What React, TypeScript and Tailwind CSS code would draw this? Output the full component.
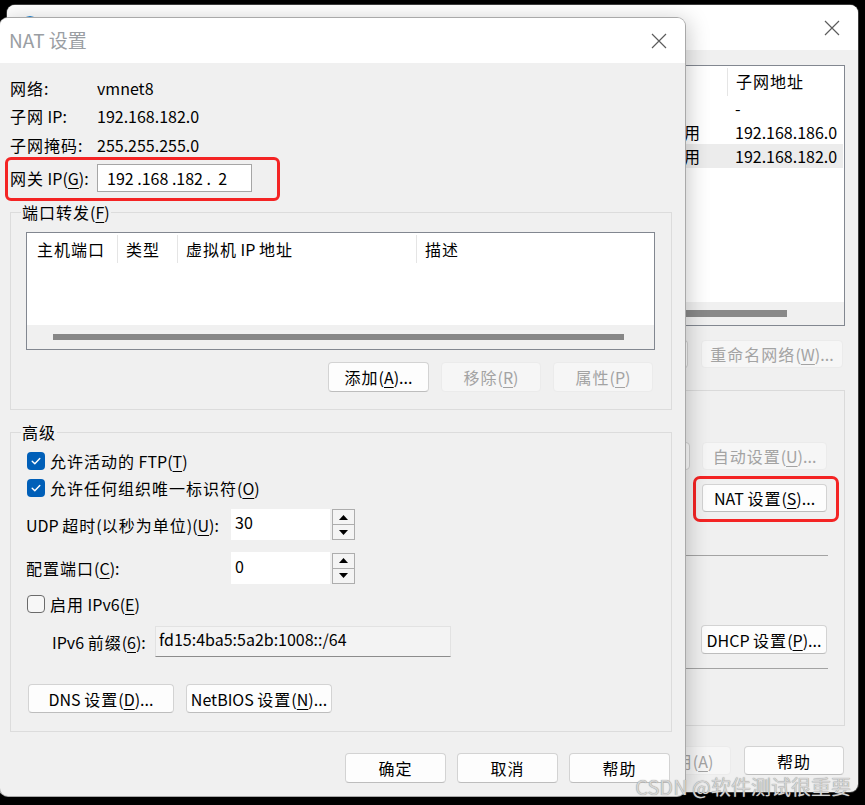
import React from "react";

// CJK runs in the reference sit on a ~17px pitch while Latin text is narrower;
// widen only the CJK runs with a little letter spacing.
function T({ s }: { s: string }) {
  const parts = s.split(/([\u3400-\u9fff]+)/);
  return (
    <span className="whitespace-pre">
      {parts.map((p, i) =>
        /[\u3400-\u9fff]/.test(p) ? (
          <span key={i} className="tracking-[1px]">
            {p}
          </span>
        ) : (
          <React.Fragment key={i}>{p}</React.Fragment>
        )
      )}
    </span>
  );
}

function Mn({ c }: { c: string }) {
  return <span className="underline decoration-1 underline-offset-[3px]">{c}</span>;
}

function CloseX() {
  return (
    <svg width="16" height="16" viewBox="0 0 16 16">
      <path d="M1 1 L15 15 M15 1 L1 15" stroke="#5c5c5c" strokeWidth="1.2" fill="none" />
    </svg>
  );
}

type BtnProps = { children?: React.ReactNode; className?: string; disabled?: boolean };
function Btn({ children, className = "", disabled = false }: BtnProps) {
  return (
    <div
      className={`flex shrink-0 items-center justify-center whitespace-nowrap rounded-[4px] border ${
        disabled
          ? "border-[#ebebeb] bg-[#f6f6f6] text-[#a3a3a3]"
          : "border-[#d3d3d3] border-b-[#bdbdbd] bg-[#fdfdfd] text-black"
      } ${className}`}
    >
      <span>{children}</span>
    </div>
  );
}

function Check({ checked }: { checked: boolean }) {
  return checked ? (
    <div className="flex h-[18px] w-[18px] shrink-0 items-center justify-center rounded-[4px] bg-[#005fb8]">
      <svg width="12" height="12" viewBox="0 0 12 12">
        <path d="M2.2 6.3 L4.8 8.8 L9.8 3.4" stroke="white" strokeWidth="1.4" fill="none" strokeLinecap="round" strokeLinejoin="round" />
      </svg>
    </div>
  ) : (
    <div className="h-[18px] w-[18px] shrink-0 rounded-[4px] border border-[#6b6b6b] bg-[#f7f7f7]" />
  );
}

function Spin() {
  return (
    <div className="ml-[2px] flex h-[31px] w-[23px] flex-col border border-[#adadad] bg-[#f4f4f4]">
      <div className="flex flex-1 items-center justify-center border-b border-[#adadad]">
        <svg width="9" height="5" viewBox="0 0 9 5">
          <path d="M0 5 L4.5 0 L9 5 Z" fill="#000" />
        </svg>
      </div>
      <div className="flex flex-1 items-center justify-center">
        <svg width="9" height="5" viewBox="0 0 9 5">
          <path d="M0 0 L4.5 5 L9 0 Z" fill="#000" />
        </svg>
      </div>
    </div>
  );
}

// Only the columns that show past the front dialog carry text (DHCP, 子网地址).
const netRows = [
  { dhcp: "", subnet: "-", selected: false },
  { dhcp: "已启用", subnet: "192.168.186.0", selected: false },
  { dhcp: "已启用", subnet: "192.168.182.0", selected: true },
];
const netCols = ["w-[89px]", "w-[110px]", "w-[220px]", "w-[205px]"];

function BackWindow() {
  return (
    <div className="absolute left-[7px] top-[5px] flex h-[787px] w-[851px] flex-col overflow-hidden rounded-[8px] bg-[#f0f0f0] ring-1 ring-[#3c3c3c]">
      <div className="flex h-[45px] shrink-0 items-center justify-between bg-white pl-[14px] pr-[18px]">
        <div className="mb-[6px] h-[18px] w-[18px] rounded-full bg-[#1f86d6]" />
        <CloseX />
      </div>
      <div className="flex flex-1 flex-col px-[13px]">
        {/* network list */}
        <div className="mt-[15px] flex h-[261px] flex-col border border-[#828790] bg-white">
          <div className="flex h-[30px] shrink-0">
            {netCols.map((w, i) => (
              <div key={i} className={`${w} mt-[2px] border-r border-[#e5e5e5]`} />
            ))}
            <div className="mt-[2px] w-[83px] border-r border-[#e5e5e5]" />
            <div className="flex flex-1 items-center pl-[8px]">
              <T s="子网地址" />
            </div>
          </div>
          <div className="flex flex-col px-[1px]">
            {netRows.map((r, ri) => (
              <div key={ri} className={`flex h-[24px] items-center ${r.selected ? "bg-[#ececec]" : ""}`}>
                <div className="w-[623px] shrink-0" />
                <div className="w-[83px] whitespace-nowrap pl-[5px]">
                  <T s={r.dhcp} />
                </div>
                <div className="flex-1 pl-[7px]">{r.subnet}</div>
              </div>
            ))}
          </div>
          <div className="flex-1" />
          <div className="flex h-[23px] shrink-0 items-center bg-[#f0f0f0] pl-[20px] pr-[57px]">
            <div className="h-[7px] flex-1 bg-[#898989]" />
          </div>
        </div>

        {/* network buttons */}
        <div className="mt-[14px] flex h-[28px] justify-end gap-[13px] pr-[2px]">
          <Btn className="w-[125px]" />
          <Btn className="w-[100px]" />
          <Btn disabled className="w-[142px]">
            <T s="重命名网络(" />
            <Mn c="W" />
            )...
          </Btn>
        </div>

        {/* VMnet info group */}
        <div className="mt-[22px] flex h-[336px] flex-col border border-[#dadada] pl-[20px] pr-[17px]">
          <div className="mt-[51px] flex h-[28px] justify-end gap-[12px]">
            <div className="w-[220px] rounded-[4px] border border-[#d3d3d3] bg-[#fdfdfd]" />
            <Btn disabled className="w-[125px]">
              <T s="自动设置(" />
              <Mn c="U" />
              )...
            </Btn>
          </div>
          <div className="mt-[14px] flex h-[28px] justify-end">
            <div className="relative">
              <Btn className="h-[28px] w-[125px]">
                <T s="NAT 设置(" />
                <Mn c="S" />
                )...
              </Btn>
              <div className="absolute left-[-9px] top-[-8px] h-[46px] w-[146px] rounded-[7px] border-[3px] border-[#f42424]" />
            </div>
          </div>
          <div className="mr-[-1px] mt-[43px] h-px bg-[#a3a3a3]" />
          <div className="mt-[69px] flex h-[29px] justify-end">
            <Btn className="w-[126px]">
              <T s="DHCP 设置(" />
              <Mn c="P" />
              )...
            </Btn>
          </div>
          <div className="mr-[-1px] mt-[14px] h-px bg-[#a3a3a3]" />
        </div>

        {/* bottom buttons */}
        <div className="mt-[20px] flex h-[29px] justify-end gap-[13px] pr-[1px]">
          <Btn className="w-[100px]" />
          <Btn className="w-[100px]" />
          <Btn disabled className="w-[90px]">
            <T s="应用(" />
            <Mn c="A" />)
          </Btn>
          <Btn className="w-[100px]">
            <T s="帮助" />
          </Btn>
        </div>
      </div>
    </div>
  );
}

function NatDialog() {
  return (
    <div className="absolute left-0 top-[18px] flex h-[778px] w-[685px] flex-col overflow-hidden rounded-[8px] bg-[#f0f0f0] shadow-[3px_2px_22px_rgba(0,0,0,0.22)] ring-1 ring-[#a9a9a9]">
      <div className="flex h-[45px] shrink-0 items-center justify-between bg-white pl-[9px] pr-[18px]">
        <span className="text-[19px] text-[#9a9ea3]">NAT 设置</span>
        <CloseX />
      </div>
      <div className="flex flex-col pl-[10px] pr-[13px] pt-[11px]">
        <div className="flex h-[28px] items-center">
          <span className="w-[87px]">
            <T s="网络:" />
          </span>
          <span>vmnet8</span>
        </div>
        <div className="flex h-[28px] items-center">
          <span className="w-[87px]">
            <T s="子网 IP:" />
          </span>
          <span>192.168.182.0</span>
        </div>
        <div className="flex h-[30px] items-center">
          <span className="w-[87px]">
            <T s="子网掩码:" />
          </span>
          <span>255.255.255.0</span>
        </div>
        <div className="relative mt-[4px] flex h-[28px] items-center">
          <span className="w-[87px] whitespace-nowrap">
            <T s="网关 IP(" />
            <Mn c="G" />
            ):
          </span>
          <div className="flex h-[28px] w-[155px] items-center whitespace-pre border border-[#a6a6a6] bg-white pl-[9px]">
            192 .168 .182 .  2
          </div>
          <div className="absolute left-[-5px] top-[-7px] h-[44px] w-[275px] rounded-[6px] border-[3px] border-[#f42424]" />
        </div>

        {/* port forwarding */}
        <fieldset className="mt-[8px] border border-[#dcdcdc]">
          <legend className="ml-[10px] px-[1px] leading-[24px]">
            <T s="端口转发(" />
            <Mn c="F" />)
          </legend>
          <div className="flex flex-col pb-[17px] pl-[15px] pr-[16px] pt-[8px]">
            <div className="flex h-[118px] flex-col border border-[#828790] bg-white">
              <div className="flex h-[30px] shrink-0">
                <div className="mt-[2px] flex w-[91px] items-center border-r border-[#e5e5e5] pl-[10px]">
                  <T s="主机端口" />
                </div>
                <div className="mt-[2px] flex w-[60px] items-center border-r border-[#e5e5e5] pl-[8px]">
                  <T s="类型" />
                </div>
                <div className="mt-[2px] flex w-[239px] items-center border-r border-[#e5e5e5] pl-[8px]">
                  <T s="虚拟机 IP 地址" />
                </div>
                <div className="mt-[2px] flex flex-1 items-center pl-[8px]">
                  <T s="描述" />
                </div>
              </div>
              <div className="flex-1" />
              <div className="flex h-[24px] shrink-0 items-center bg-[#f0f0f0] pl-[26px] pr-[30px]">
                <div className="h-[6px] flex-1 bg-[#878787]" />
              </div>
            </div>
            <div className="mt-[12px] flex h-[30px] justify-end gap-[12px] pr-[2px]">
              <Btn className="w-[101px]">
                <T s="添加(" />
                <Mn c="A" />
                )...
              </Btn>
              <Btn disabled className="w-[100px]">
                <T s="移除(" />
                <Mn c="R" />)
              </Btn>
              <Btn disabled className="w-[100px]">
                <T s="属性(" />
                <Mn c="P" />)
              </Btn>
            </div>
          </div>
        </fieldset>

        {/* advanced */}
        <fieldset className="mt-[10px] border border-[#dcdcdc]">
          <legend className="ml-[10px] px-[1px] leading-[24px]">
            <T s="高级" />
          </legend>
          <div className="flex flex-col pb-[18px] pl-[15px] pt-[8px]">
            <div className="ml-[1px] flex h-[18px] items-center gap-[5px]">
              <Check checked />
              <span className="whitespace-nowrap">
                <T s="允许活动的 FTP(" />
                <Mn c="T" />)
              </span>
            </div>
            <div className="ml-[1px] mt-[9px] flex h-[18px] items-center gap-[5px]">
              <Check checked />
              <span className="whitespace-nowrap">
                <T s="允许任何组织唯一标识符(" />
                <Mn c="O" />)
              </span>
            </div>
            <div className="mt-[12px] flex h-[31px] items-center">
              <span className="w-[205px] whitespace-nowrap">
                <T s="UDP 超时(以秒为单位)(" />
                <Mn c="U" />
                ):
              </span>
              <div className="flex h-[31px] w-[99px] items-center bg-white pb-[5px] pl-[4px]">30</div>
              <Spin />
            </div>
            <div className="mt-[12px] flex h-[32px] items-center">
              <span className="w-[205px] whitespace-nowrap">
                <T s="配置端口(" />
                <Mn c="C" />
                ):
              </span>
              <div className="flex h-[32px] w-[99px] items-center bg-white pb-[5px] pl-[4px]">0</div>
              <Spin />
            </div>
            <div className="ml-[1px] mt-[11px] flex h-[18px] items-center gap-[5px]">
              <Check checked={false} />
              <span className="whitespace-nowrap">
                <T s="启用 IPv6(" />
                <Mn c="E" />)
              </span>
            </div>
            <div className="ml-[26px] mt-[13px] flex h-[31px] items-center">
              <span className="w-[103px] whitespace-nowrap">
                <T s="IPv6 前缀(" />
                <Mn c="6" />
                ):
              </span>
              <div className="flex h-[31px] w-[296px] items-center border border-[#e2e2e2] border-b-[#8c8c8c] bg-[#f3f3f3] pb-[5px] pl-[3px]">
                fd15:4ba5:5a2b:1008::/64
              </div>
            </div>
            <div className="ml-[2px] mt-[27px] flex h-[29px] gap-[12px]">
              <Btn className="w-[146px]">
                <T s="DNS 设置(" />
                <Mn c="D" />
                )...
              </Btn>
              <Btn className="w-[146px]">
                <T s="NetBIOS 设置(" />
                <Mn c="N" />
                )...
              </Btn>
            </div>
          </div>
        </fieldset>

        <div className="mt-[21px] flex h-[30px] justify-end gap-[11px] pr-[2px]">
          <Btn className="w-[101px]">
            <T s="确定" />
          </Btn>
          <Btn className="w-[101px]">
            <T s="取消" />
          </Btn>
          <Btn className="w-[101px]">
            <T s="帮助" />
          </Btn>
        </div>
      </div>
    </div>
  );
}

export default function App() {
  return (
    <div className="relative h-[805px] w-[865px] overflow-hidden bg-black text-[16px] text-black [font-family:'Noto_Sans_CJK_SC','Noto_Sans',sans-serif]">
      <BackWindow />
      <NatDialog />
      <div className="absolute right-[14px] top-[775px] whitespace-nowrap text-[20px] leading-[24px] text-[#d4d4d4] [text-shadow:0_0_1px_#7a7a7a]">
        CSDN @软件测试很重要
      </div>
    </div>
  );
}
